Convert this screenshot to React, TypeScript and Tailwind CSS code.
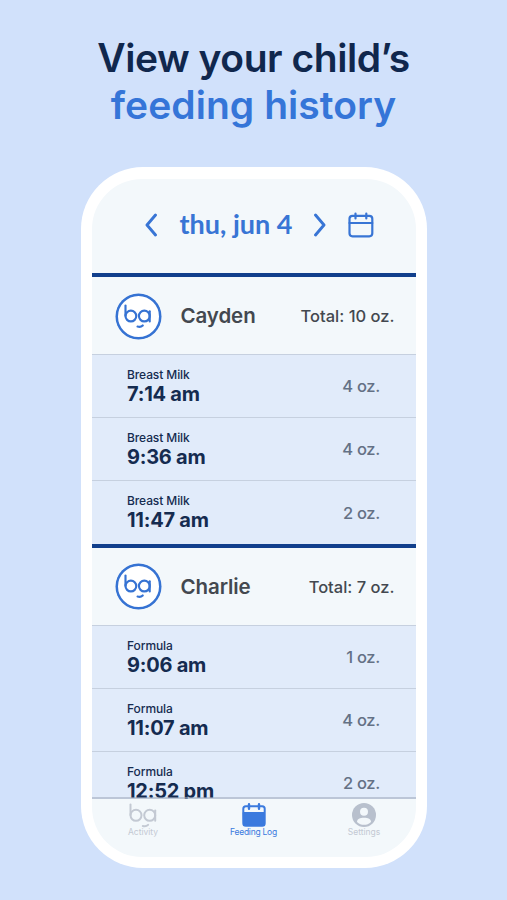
import { ReactNode } from "react";

type Feeding = { kind: string; time: string; amount: string };
type Child = { name: string; total: string; feedings: Feeding[] };

const children: Child[] = [
  {
    name: "Cayden",
    total: "Total: 10 oz.",
    feedings: [
      { kind: "Breast Milk", time: "7:14 am", amount: "4 oz." },
      { kind: "Breast Milk", time: "9:36 am", amount: "4 oz." },
      { kind: "Breast Milk", time: "11:47 am", amount: "2 oz." },
    ],
  },
  {
    name: "Charlie",
    total: "Total: 7 oz.",
    feedings: [
      { kind: "Formula", time: "9:06 am", amount: "1 oz." },
      { kind: "Formula", time: "11:07 am", amount: "4 oz." },
      { kind: "Formula", time: "12:52 pm", amount: "2 oz." },
    ],
  },
];

function Face({ className }: { className: string }) {
  return (
    <svg viewBox="0 0 28 25" fill="none" stroke="currentColor" strokeLinecap="round" className={className}>
      <path d="M1.5 1.500v10.500" />
      <circle cx="7" cy="12.300" r="5.500" />
      <circle cx="20.700" cy="12.300" r="5.500" />
      <path d="M26.200 7.500v10.300" />
      <path d="M13.800 23c2 .7 3.900.3 5.300-1.100" />
    </svg>
  );
}

function Chevron({ d }: { d: string }) {
  return (
    <svg viewBox="0 0 14 24" fill="none" stroke="currentColor" strokeWidth="2.9" strokeLinecap="round" strokeLinejoin="round" className="w-[14px] h-6">
      <path d={d} />
    </svg>
  );
}

function Tab({ label, className, children }: { label: string; className: string; children: ReactNode }) {
  return (
    <div className={`flex flex-col items-center shrink-0 w-[110.5px] ${className}`}>
      <div className="h-[24px] flex items-start justify-center">{children}</div>
      <span className="text-[8.5px] leading-[11px] whitespace-nowrap">{label}</span>
    </div>
  );
}

function ChildSection({ child }: { child: Child }) {
  return (
    <section className="border-t-4 border-[#113f8c]">
      <div className="flex items-center h-[77px] pl-[24px] pr-[21px] text-[#43484f]">
        <div className="size-[45px] mt-px rounded-full border-2 border-[#3673d3] ring-[0.5px] ring-[#3673d3] bg-white text-[#3673d3] flex items-center justify-center">
          <Face className="w-[27.5px] h-[24.5px] shrink-0 [stroke-width:2.2]" />
        </div>
        <span className="ml-5 mt-[2px] text-[20.5px] font-semibold tracking-[-0.1px]">{child.name}</span>
        <span className="ml-auto mt-[2px] text-[16.5px] font-medium">{child.total}</span>
      </div>
      {child.feedings.map((f) => (
        <div
          key={f.time}
          className="flex items-center justify-between h-[63.2px] border-t border-[#c6d0df] bg-[#e1ebfa] pl-[35.5px] pr-[35.5px]"
        >
          <div className="text-[#152b50] pt-[2px]">
            <p className="text-[12px] leading-[15px] font-medium tracking-[-0.1px]">{f.kind}</p>
            <p className="text-[20px] leading-[25px] font-bold tracking-[-0.25px]">{f.time}</p>
          </div>
          <span className="text-[16.5px] font-medium tracking-[-0.3px] text-[#647185] pt-px">{f.amount}</span>
        </div>
      ))}
    </section>
  );
}

export default function App() {
  return (
    <main className="w-[507px] h-[900px] overflow-hidden bg-[#d1e1fb] flex flex-col items-center font-['Inter',sans-serif]">
      <h1 className="mt-[34px] h-[133px] text-center text-[39px] leading-[47px] font-semibold text-[#10274d]">
        <span className="tracking-[-0.45px]">View your child’s</span>
        <br />
        <span className="tracking-[0.05px] text-[#3575d8]">feeding history</span>
      </h1>
      <div className="w-[346px] h-[701px] shrink-0 rounded-[62px] bg-white px-[11px] pt-3 pb-[11px]">
        <div className="h-full rounded-[50px] overflow-hidden bg-[#f3f8fb] flex flex-col">
          <header className="h-[94px] shrink-0 flex items-center pb-[2px] pl-[52px] text-[#3875d5]">
            <Chevron d="M11.5 2 3 12l8.5 10" />
            <span className="w-[112px] ml-[22px] pb-px text-[27px] font-bold font-['Lato',sans-serif] whitespace-nowrap">
              thu, jun 4
            </span>
            <span className="ml-[21px] flex">
              <Chevron d="M2.5 2 11 12 2.5 22" />
            </span>
            <svg viewBox="0 0 26 26" fill="none" stroke="currentColor" strokeWidth="2.2" strokeLinecap="round" className="size-[26px] ml-[21px]">
              <rect x="1.5" y="3.8" width="22.8" height="20.5" rx="3" />
              <path d="M1.5 11h22.800M7.500 1.500v5M18.300 1.500v5" />
            </svg>
          </header>
          <div className="flex-1 min-h-0 overflow-hidden">
            {children.map((c) => (
              <ChildSection key={c.name} child={c} />
            ))}
          </div>
          {/* the divider lies over the end of the list */}
          <nav className="h-[60px] -mt-[2px] shrink-0 border-t-2 border-[#a3aebf]/60 flex justify-center pt-1">
            <Tab label="Activity" className="text-[#c3c9d3]">
              <Face className="w-[28px] h-[25px] [stroke-width:2]" />
            </Tab>
            <Tab label="Feeding Log" className="text-[#3b7ade] tracking-[-0.25px]">
              <svg viewBox="0 0 24 24" className="size-6" fill="none" stroke="currentColor" strokeLinecap="round">
                <path d="M1.5 9.500h21V20a2.500 2.500 0 0 1-2.500 2.500H4A2.500 2.500 0 0 1 1.500 20z" fill="currentColor" />
                <rect x="1.3" y="3.2" width="21.4" height="19.6" rx="2.5" strokeWidth="2" />
                <path d="M7 1.200v4.600M17 1.200v4.600" strokeWidth="2.4" />
              </svg>
            </Tab>
            <Tab label="Settings" className="text-[#c3c9d3]">
              <svg viewBox="0 0 24 24" className="size-6">
                <circle cx="12" cy="12" r="12" fill="#b8c0cd" />
                <circle cx="12" cy="8.8" r="4" fill="#f3f8fb" />
                <path d="M5 19c0-3 3-4.300 7-4.300s7 1.300 7 4.300c-2 2-4.500 2.800-7 2.800S7 21 5 19z" fill="#f3f8fb" />
              </svg>
            </Tab>
          </nav>
        </div>
      </div>
    </main>
  );
}
